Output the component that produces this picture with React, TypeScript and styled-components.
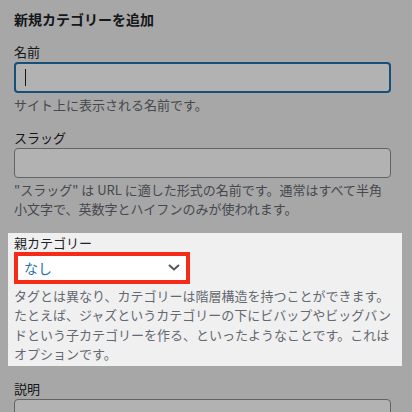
import React from 'react'
import { styled, createGlobalStyle } from 'styled-components'

const GlobalStyle = createGlobalStyle`
    html, body {
        margin: 0;
        padding: 0;
        background: #f0f0f1;
    }
    body {
        font-family: 'Noto Sans CJK JP', 'Noto Sans', sans-serif;
        color: #1d2327;
    }
`

export default function App() {
    return (
        <>
            <GlobalStyle />
            <Page>
                <Title>新規カテゴリーを追加</Title>

                <Field>
                    <Label>名前</Label>
                    <TextBox $focused>
                        <Caret />
                    </TextBox>
                    <Help>サイト上に表示される名前です。</Help>
                </Field>

                <Field>
                    <Label>スラッグ</Label>
                    <TextBox />
                    <Help>
                        "スラッグ" は URL に適した形式の名前です。通常はすべて半角
                        <br />
                        小文字で、英数字とハイフンのみが使われます。
                    </Help>
                </Field>

                <Spotlight>
                    <Label $tight>親カテゴリー</Label>
                    <Select>
                        <SelectValue>なし</SelectValue>
                        <svg width="12" height="7" viewBox="0 0 12 7" fill="none">
                            <path d="M1 1l5 4.5L11 1" stroke="#50575e" strokeWidth="2" />
                        </svg>
                    </Select>
                    <Help>
                        タグとは異なり、カテゴリーは階層構造を持つことができます。
                        <br />
                        たとえば、ジャズというカテゴリーの下にビバップやビッグバン
                        <br />
                        ドという子カテゴリーを作る、といったようなことです。これは
                        <br />
                        オプションです。
                    </Help>
                </Spotlight>

                <Field $gap={13}>
                    <Label>説明</Label>
                    <TextArea />
                </Field>
            </Page>
        </>
    )
}

const Page = styled.div`
    position: relative;
    height: 412px;
    overflow: hidden;
    padding: 9px 21px 0 14px;
    box-sizing: border-box;
`

const Title = styled.h2`
    margin: 0;
    font-size: 14px;
    line-height: 20px;
    font-weight: 700;
    color: #1d2327;
`

type FieldProps = {
    $gap?: number
}

const Field = styled.div<FieldProps>`
    margin-top: ${(p) => p.$gap ?? 13}px;
`

type LabelProps = {
    $tight?: boolean
}

const Label = styled.div<LabelProps>`
    font-size: 13px;
    line-height: ${(p) => (p.$tight ? 19 : 20)}px;
    color: #1d2327;
`

type BoxProps = {
    $focused?: boolean
}

const TextBox = styled.div<BoxProps>`
    display: flex;
    align-items: center;
    box-sizing: border-box;
    height: ${(p) => (p.$focused ? 31 : 30)}px;
    padding: 0 9px;
    background: #fff;
    border-radius: 4px;
    border: ${(p) => (p.$focused ? '2px solid #2271b1' : '1px solid #8c8f94')};
`

const Caret = styled.span`
    width: 1px;
    height: 17px;
    background: #1d2327;
`

const Help = styled.p`
    margin: 2px 0 0;
    font-size: 13px;
    line-height: 19.5px;
    color: #646970;
    white-space: nowrap;
`

const Spotlight = styled.div`
    position: relative;
    z-index: 1;
    margin: 14px -11px 0 -6px;
    padding: 0 11px 2px 6px;
    background: #f0f0f1;
    box-shadow: 0 0 0 2000px rgba(0, 0, 0, 0.3);
`

const Select = styled.div`
    display: flex;
    align-items: center;
    justify-content: space-between;
    box-sizing: border-box;
    width: 176px;
    height: 32px;
    padding: 0 6px 0 6px;
    background: #fff;
    border: 4px solid #f52a17;
`

const SelectValue = styled.span`
    font-size: 14px;
    color: #2271b1;
`

const TextArea = styled.div`
    height: 60px;
    margin-top: 0;
    border: 1px solid #8c8f94;
    border-radius: 4px;
    background: #fff;
`
